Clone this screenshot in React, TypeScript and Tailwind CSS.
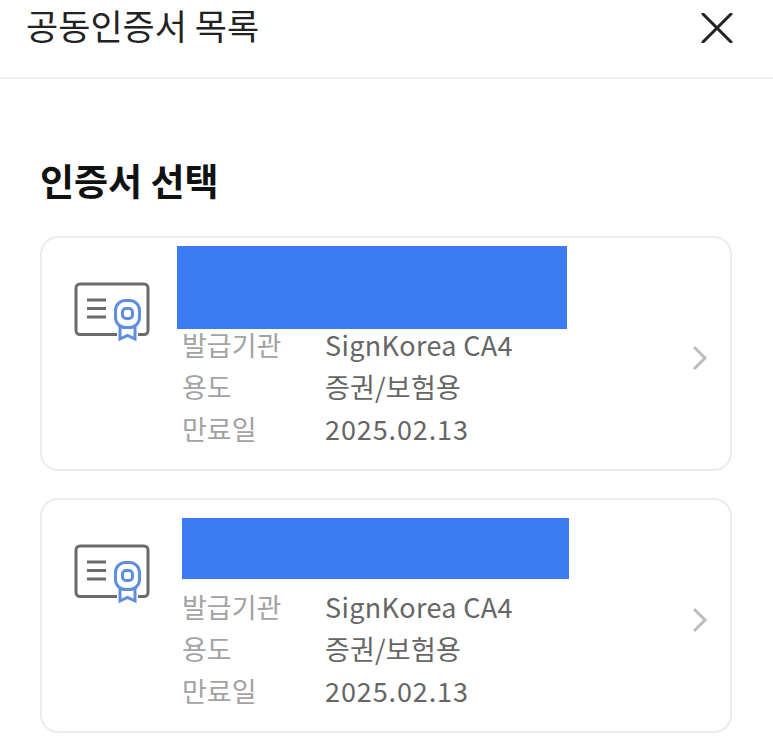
const font = "font-['Noto_Sans_CJK_KR','Noto_Sans',sans-serif]";

function CertIcon() {
  return (
    <svg width="76" height="60" viewBox="0 0 76 60" fill="none">
      <path d="M43 52.5H6a4 4 0 0 1-4-4V6a4 4 0 0 1 4-4h64a4 4 0 0 1 4 4v42.5a4 4 0 0 1-4 4h-6" stroke="#6b6b6b" strokeWidth="3" />
      <path d="M13 18h19M13 26.5h19M13 35h19" stroke="#6b6b6b" strokeWidth="3" />
      <path d="M46 44v13l7.5-3.5L61 57V44" stroke="#5f8fdc" strokeWidth="3" fill="#fff" />
      <rect x="41.5" y="18.5" width="24" height="27" rx="10" stroke="#5f8fdc" strokeWidth="3" fill="#fff" />
      <rect x="48.5" y="26.5" width="10" height="10" rx="3.5" stroke="#5f8fdc" strokeWidth="3" />
    </svg>
  );
}

function Row({ label, value, spacing }: { label: string; value: string; spacing: string }) {
  return (
    <div className="flex h-[42px] items-center text-[27px]">
      <span className="w-[143px] text-[#a3a3a3]">{label}</span>
      <span className={`text-[#666] ${spacing}`}>{value}</span>
    </div>
  );
}

function Card({ barH, barW, barX, top }: { barH: string; barW: string; barX: string; top: string }) {
  return (
    <div className="relative ml-10 h-[235px] w-[692px] rounded-[18px] border-2 border-[#ececec] bg-white">
      <div className="absolute left-[32px] top-[44px]"><CertIcon /></div>
      <div className={`absolute bg-[#3b7cf2] ${barH} ${barW} ${barX} ${top}`} />
      <div className="absolute left-[140px] top-[86px]">
        <Row label="발급기관" value="SignKorea CA4" spacing="tracking-[0.35px]" />
        <Row label="용도" value="증권/보험용" spacing="tracking-[0.2px]" />
        <Row label="만료일" value="2025.02.13" spacing="tracking-[0.9px]" />
      </div>
      <svg className="absolute left-[649px] top-[107px]" width="18" height="26" viewBox="0 0 18 26" fill="none">
        <path d="M3 2l11 11L3 24" stroke="#bdbdbd" strokeWidth="3" />
      </svg>
    </div>
  );
}

export default function App() {
  return (
    <div className={`h-[743px] w-[773px] overflow-hidden bg-white ${font}`}>
      <header className="flex h-[79px] items-start justify-between border-b-2 border-[#eeeeee] pl-[26px] pr-10">
        <h1 className="text-[35px] leading-[50px] text-[#222]">공동인증서 목록</h1>
        <svg className="mt-[13px]" width="32" height="30" viewBox="0 0 32 30" fill="none">
          <path d="M2 1l28 28M30 1L2 29" stroke="#222" strokeWidth="3" strokeLinecap="round" />
        </svg>
      </header>
      <h2 className="ml-10 mt-[73px] text-[37px] font-bold leading-[56px] text-[#111]">인증서 선택</h2>
      <div className="mt-[28px] flex flex-col gap-[27px]">
        <Card barH="h-[83px]" barW="w-[390px]" barX="left-[135px]" top="top-[8px]" />
        <Card barH="h-[61px]" barW="w-[387px]" barX="left-[140px]" top="top-[18px]" />
      </div>
    </div>
  );
}
